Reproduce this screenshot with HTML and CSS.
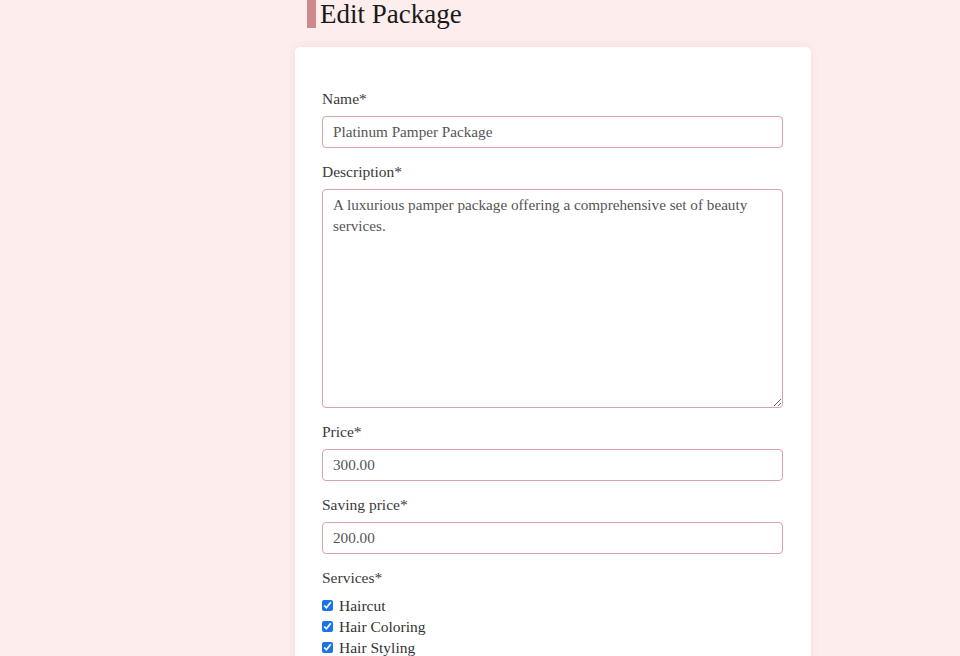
FILE: index.html
```html
<!DOCTYPE html>
<html lang="en">
<head>
<meta charset="utf-8">
<title>Edit Package</title>
<link rel="stylesheet" href="styles.css">
</head>
<body>
<main class="page">
  <h1 class="title">Edit Package</h1>
  <form class="card">
    <div class="field">
      <label class="label" for="name">Name*</label>
      <input class="input" id="name" type="text" value="Platinum Pamper Package">
    </div>
    <div class="field">
      <label class="label" for="desc">Description*</label>
      <textarea class="input textarea" id="desc">A luxurious pamper package offering a comprehensive set of beauty services.</textarea>
    </div>
    <div class="field">
      <label class="label" for="price">Price*</label>
      <input class="input" id="price" type="text" value="300.00">
    </div>
    <div class="field">
      <label class="label" for="saving">Saving price*</label>
      <input class="input" id="saving" type="text" value="200.00">
    </div>
    <div class="field">
      <span class="label">Services*</span>
      <div class="checks">
        <label class="check"><input type="checkbox" checked> Haircut</label>
        <label class="check"><input type="checkbox" checked> Hair Coloring</label>
        <label class="check"><input type="checkbox" checked> Hair Styling</label>
        <label class="check"><input type="checkbox" checked> Manicure</label>
      </div>
    </div>
  </form>
</main>
</body>
</html>
```
FILE: styles.css
```css
* { box-sizing: border-box; }
html, body { margin: 0; padding: 0; }
body {
  background: #fdeeed;
  font-family: "Liberation Serif", "Times New Roman", serif;
  color: #333;
  overflow: hidden;
  height: 656px;
}
.page {
  margin-left: 295px;
  width: 516px;
}
.title {
  margin: 0 0 19px 12px;
  font-size: 27px;
  line-height: 28px;
  font-weight: 400;
  color: #1a1a1a;
  border-left: 9px solid #cd8a8c;
  padding-left: 4px;
}
.card {
  background: #fff;
  border-radius: 5px;
  box-shadow: 0 0 10px rgba(200, 140, 140, 0.18);
  padding: 42px 28px 40px 27px;
}
.field { margin-bottom: 14px; }
.label {
  display: block;
  font-size: 15.5px;
  line-height: 20px;
  margin-bottom: 7px;
  color: #3a3a3a;
}
.input {
  display: block;
  width: 100%;
  height: 32px;
  border: 1px solid #d9a2a4;
  border-radius: 4px;
  padding: 0 10px;
  font-family: inherit;
  font-size: 15.2px;
  color: #555;
  background: #fff;
  outline: none;
}
.textarea {
  height: 219px;
  padding: 4px 10px;
  line-height: 21px;
  resize: vertical;
}
.checks {
  display: flex;
  flex-direction: column;
  margin-top: 7px;
}
.check {
  display: flex;
  align-items: center;
  height: 21px;
  font-size: 15.5px;
  color: #333;
}
.check input {
  margin: 0 6px 0 0;
  width: 11px;
  height: 11px;
  accent-color: #1a73e8;
}
```
